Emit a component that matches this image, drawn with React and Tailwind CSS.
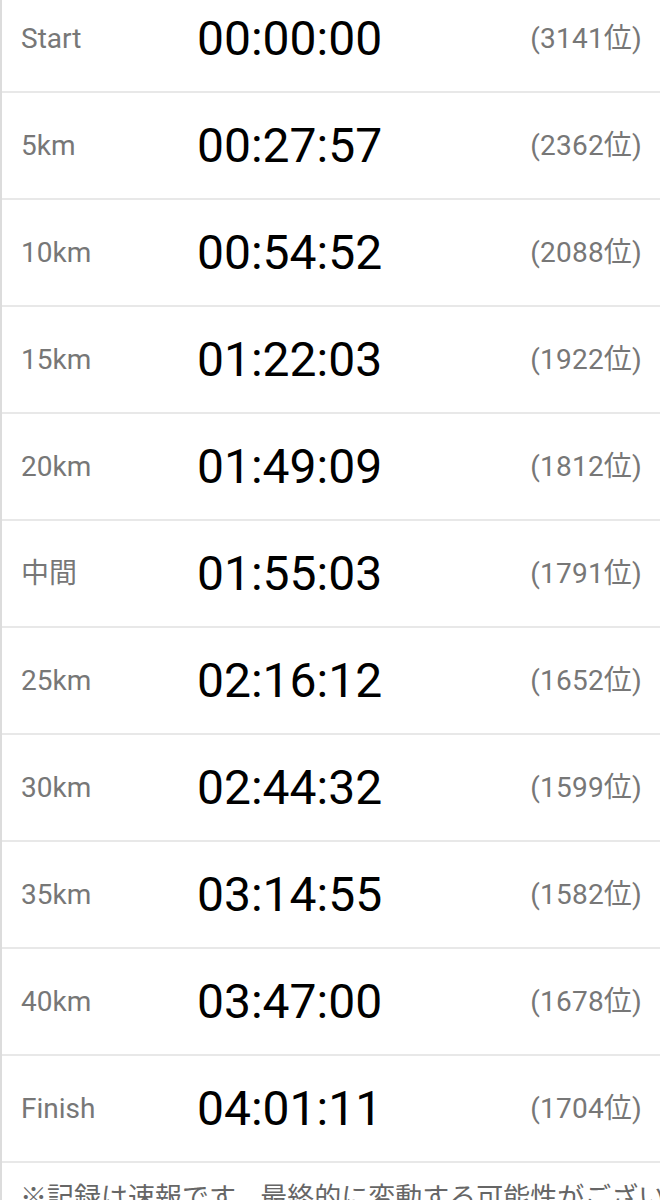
import React from "react";

// ===== Split data =====
const splits = [
  { label: "Start", time: "00:00:00", rank: 3141 },
  { label: "5km", time: "00:27:57", rank: 2362 },
  { label: "10km", time: "00:54:52", rank: 2088 },
  { label: "15km", time: "01:22:03", rank: 1922 },
  { label: "20km", time: "01:49:09", rank: 1812 },
  { label: "中間", time: "01:55:03", rank: 1791 },
  { label: "25km", time: "02:16:12", rank: 1652 },
  { label: "30km", time: "02:44:32", rank: 1599 },
  { label: "35km", time: "03:14:55", rank: 1582 },
  { label: "40km", time: "03:47:00", rank: 1678 },
  { label: "Finish", time: "04:01:11", rank: 1704 },
];

export default function App() {
  return (
    <div
      className="h-[1200px] overflow-hidden bg-white"
      style={{ fontFamily: "Roboto, 'Noto Sans CJK JP', sans-serif" }}
    >
      <div className="-mt-[14px] border-l-2 border-[#dcdcdc]">
        {splits.map((s) => (
          <div
            key={s.label}
            className="flex h-[107px] items-center border-b-2 border-[#e8e8e8] pl-[19px] pr-[18px]"
          >
            <div className="w-[176px] text-[28px] text-[#777777]">{s.label}</div>
            <div className="flex-1 text-[48px] leading-none text-black">{s.time}</div>
            <div className="text-[28px] tracking-[0.2px] text-[#777777]">({s.rank}位)</div>
          </div>
        ))}
        <p className="whitespace-nowrap pl-[18px] pt-[15px] text-[27px] text-[#666666]">
          ※記録は速報です。最終的に変動する可能性がございます。
        </p>
      </div>
    </div>
  );
}
